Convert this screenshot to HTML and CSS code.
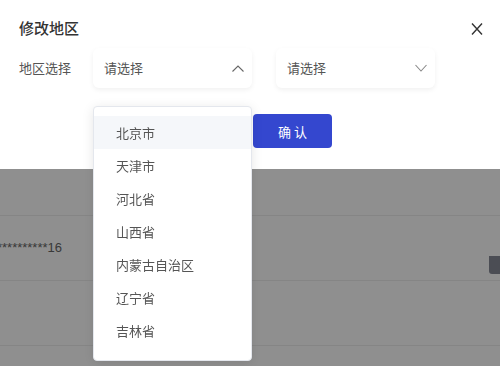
FILE: index.html
```html
<!DOCTYPE html>
<html lang="zh-CN">
<head>
    <meta charset="UTF-8">
    <meta name="viewport" content="width=device-width, initial-scale=1.0">
    <title>修改地区</title>
    <link rel="stylesheet" href="styles.css">
</head>
<body>

<!-- 背景页面 -->
<div class="page">
    <div class="row"></div>
    <div class="row">
        <div class="card-no"><span>****************16</span></div>
        <span class="tag"></span>
    </div>
    <div class="row"></div>
</div>

<div class="mask"></div>

<!-- 弹窗 -->
<div class="dialog">
    <div class="dialog-header">
        <span class="dialog-title">修改地区</span>
        <svg class="close" width="12" height="12" viewBox="0 0 12 12">
            <path d="M1 0.5 L11 11.5 M11 0.5 L1 11.5" stroke="#333" stroke-width="1.4" fill="none"/>
        </svg>
    </div>

    <div class="dialog-body">
        <div class="form-row">
            <span class="label">地区选择</span>
            <div class="select">
                <span>请选择</span>
                <svg width="12" height="7" viewBox="0 0 12 7">
                    <path d="M0.5 6.5 L6 1 L11.5 6.5" stroke="#666" stroke-width="1.1" fill="none"/>
                </svg>
                <ul class="dropdown">
                    <li class="active">北京市</li>
                    <li>天津市</li>
                    <li>河北省</li>
                    <li>山西省</li>
                    <li>内蒙古自治区</li>
                    <li>辽宁省</li>
                    <li>吉林省</li>
                </ul>
            </div>
            <div class="select">
                <span>请选择</span>
                <svg width="12" height="8" viewBox="0 0 12 8">
                    <path d="M0.5 1 L6 7 L11.5 1" stroke="#888" stroke-width="1.1" fill="none"/>
                </svg>
            </div>
        </div>

        <div class="btn-row">
            <button class="btn-confirm">确 认</button>
        </div>
    </div>
</div>

</body>
</html>
```

FILE: styles.css
```css
body {
    font-family: "Noto Sans CJK SC", "Noto Sans", sans-serif;
    margin: 0;
    padding: 0;
    background-color: #fff;
    color: #555;
    font-size: 13px;
}
.page {
    padding-top: 151px;
}
.row {
    height: 64px;
    border-bottom: 1px solid #eee;
    display: flex;
    justify-content: space-between;
    align-items: center;
}
.card-no {
    width: 62px;
    overflow: hidden;
    white-space: nowrap;
    display: flex;
    justify-content: flex-end;
    color: #666;
    font-size: 13px;
    font-family: "Liberation Sans", sans-serif;
    margin-top: -2px;
}
.tag {
    align-self: flex-end;
    width: 11px;
    height: 18px;
    margin-bottom: 6px;
    background-color: #868a97;
    border-bottom-left-radius: 3px;
}
.mask {
    position: fixed;
    top: 0;
    left: 0;
    right: 0;
    bottom: 0;
    background-color: rgba(0, 0, 0, 0.44);
}
.dialog {
    position: fixed;
    top: 0;
    left: 0;
    right: 0;
    height: 169px;
    background-color: #fff;
}
.dialog-header {
    display: flex;
    justify-content: space-between;
    align-items: center;
    padding: 18px 17px 0 19px;
    height: 20px;
}
.dialog-title {
    font-size: 15px;
    font-weight: 500;
    color: #333;
    line-height: 20px;
}
.close {
    margin-top: 1px;
}
.dialog-body {
    padding: 12px 19px 0 19px;
}
.form-row {
    display: flex;
    align-items: center;
}
.label {
    flex-shrink: 0;
    width: 74px;
    white-space: nowrap;
    color: #555;
    margin-top: -3px;
}
.select {
    position: relative;
    flex-shrink: 0;
    width: 159px;
    height: 40px;
    box-sizing: border-box;
    padding: 0 8px 0 11px;
    margin-right: 24px;
    display: flex;
    justify-content: space-between;
    align-items: center;
    border-radius: 6px;
    background-color: #fff;
    box-shadow: 0 2px 5px rgba(0, 0, 0, 0.06);
    color: #555;
    margin-top: -2px;
}
.select span {
    margin-top: -1px;
}
.dropdown {
    position: absolute;
    top: 58px;
    left: 0;
    width: 159px;
    height: 255px;
    box-sizing: border-box;
    margin: 0;
    padding: 9px 0 0 0;
    list-style: none;
    background-color: #fff;
    border: 1px solid #e4e7ed;
    border-radius: 4px;
    box-shadow: 0 2px 12px rgba(0, 0, 0, 0.1);
    overflow: hidden;
}
.dropdown li {
    height: 33px;
    line-height: 33px;
    padding-left: 22px;
    color: #555;
}
.dropdown li.active {
    background-color: #f5f7fa;
}
.btn-row {
    margin-top: 26px;
    padding-left: 234px;
}
.btn-confirm {
    width: 79px;
    height: 34px;
    border: none;
    border-radius: 4px;
    background-color: #3447cf;
    color: #fff;
    font-family: "Noto Sans CJK SC", sans-serif;
    font-size: 13px;
    cursor: pointer;
}
```
